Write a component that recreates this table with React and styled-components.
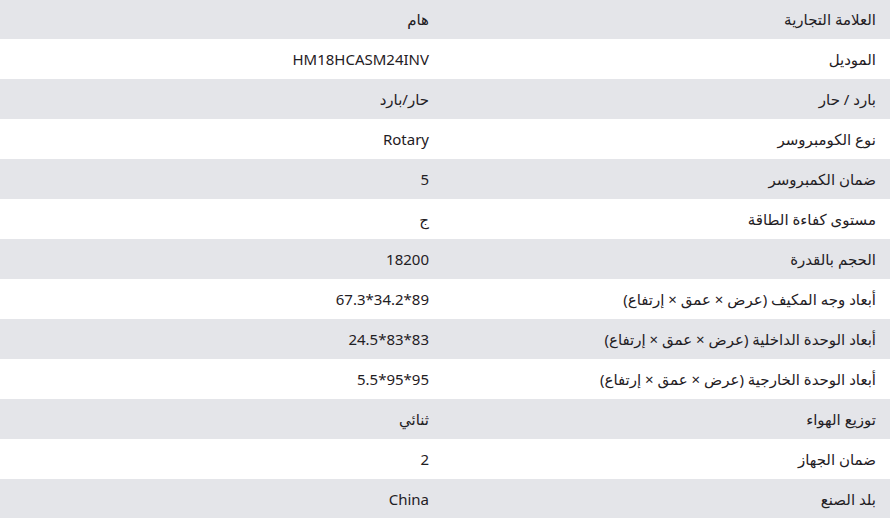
import React from "react";
import styled, { createGlobalStyle } from "styled-components";

const Global = createGlobalStyle`
  html, body { margin: 0; padding: 0; background: #fff; }
  body { font-family: "Noto Sans", "DejaVu Sans", sans-serif; }
`;

const Table = styled.div`
  direction: rtl;
  width: 890px;
  margin-top: -1px;
  display: flex;
  flex-direction: column;
`;

const Row = styled.div`
  display: grid;
  grid-template-columns: 446px 444px;
  height: 40px;
  background: ${(p) => (p.$shade ? "#e4e5e9" : "#ffffff")};
`;

const Cell = styled.div`
  display: flex;
  align-items: center;
  padding: 0 14px 0 15px;
  font-size: 15px;
  color: #1f2024;
  white-space: nowrap;
`;

const Label = styled(Cell)`
  padding-right: 14px;
`;

const Value = styled(Cell)`
  padding-right: 15px;
`;

const rows = [
  ["العلامة التجارية", "هام"],
  ["الموديل", "HM18HCASM24INV"],
  ["بارد / حار", "حار/بارد"],
  ["نوع الكومبروسر", "Rotary"],
  ["ضمان الكمبروسر", "5"],
  ["مستوى كفاءة الطاقة", "ج"],
  ["الحجم بالقدرة", "18200"],
  ["أبعاد وجه المكيف (عرض × عمق × إرتفاع)", "67.3*34.2*89"],
  ["أبعاد الوحدة الداخلية (عرض × عمق × إرتفاع)", "24.5*83*83"],
  ["أبعاد الوحدة الخارجية (عرض × عمق × إرتفاع)", "5.5*95*95"],
  ["توزيع الهواء", "ثنائي"],
  ["ضمان الجهاز", "2"],
  ["بلد الصنع", "China"],
];

export default function App() {
  return (
    <>
      <Global />
      <Table>
        {rows.map(([k, v], i) => (
          <Row key={i} $shade={i % 2 === 0}>
            <Label>{k}</Label>
            <Value>
              <bdi>{v}</bdi>
            </Value>
          </Row>
        ))}
      </Table>
    </>
  );
}
